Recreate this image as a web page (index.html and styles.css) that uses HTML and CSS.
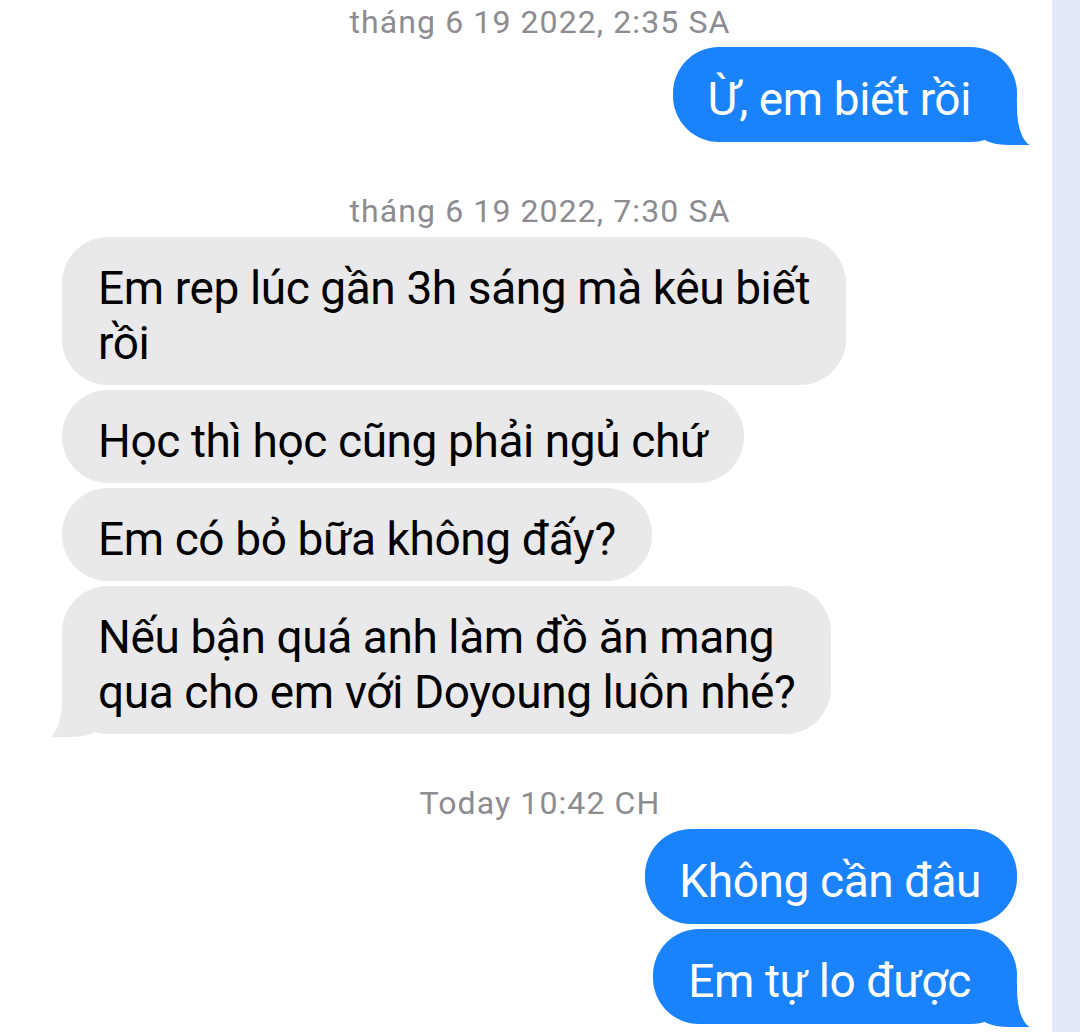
FILE: index.html
```html
<!DOCTYPE html>
<html lang="vi">
<head>
<meta charset="utf-8">
<title>Tin nhắn</title>
<link rel="stylesheet" href="styles.css">
</head>
<body>
<div class="screen">
  <main class="chat">
    <div class="stamp">tháng 6 19 2022, 2:35 SA</div>
    <div class="row me"><div class="bubble sent tail">Ừ, em biết rồi</div></div>

    <div class="stamp">tháng 6 19 2022, 7:30 SA</div>
    <div class="row them"><div class="bubble recv">Em rep lúc gần 3h sáng mà kêu biết<br>rồi</div></div>
    <div class="row them"><div class="bubble recv">Học thì học cũng phải ngủ chứ</div></div>
    <div class="row them"><div class="bubble recv">Em có bỏ bữa không đấy?</div></div>
    <div class="row them"><div class="bubble recv tail">Nếu bận quá anh làm đồ ăn mang<br>qua cho em với Doyoung luôn nhé?</div></div>

    <div class="stamp">Today 10:42 CH</div>
    <div class="row me"><div class="bubble sent">Không cần đâu</div></div>
    <div class="row me"><div class="bubble sent tail">Em tự lo được</div></div>
  </main>
  <aside class="edge"></aside>
</div>
</body>
</html>
```

FILE: styles.css
```css
html, body {
  margin: 0;
  padding: 0;
  background: #ffffff;
}

body {
  font-family: Roboto, "Noto Sans", sans-serif;
  -webkit-font-smoothing: antialiased;
}

.screen {
  width: 1080px;
  height: 1032px;
  overflow: hidden;
  display: flex;
}

.chat {
  flex: 1;
  display: flex;
  flex-direction: column;
  gap: 5px;
  padding: 4px 35px 0 62px;
  background: #ffffff;
}

.edge {
  width: 28px;
  flex: none;
  background: #e3e9f8;
}

.stamp {
  font-size: 32px;
  line-height: 36px;
  color: #8c8c91;
  text-align: center;
  margin: 46px 0 3px 0;
  padding-left: 1px;
  letter-spacing: 1.1px;
}

.stamp:first-child {
  margin-top: 0;
  margin-bottom: 2px;
}

.row {
  display: flex;
}

.row.me {
  justify-content: flex-end;
}

.row.them {
  justify-content: flex-start;
}

.bubble {
  position: relative;
  font-size: 46px;
  line-height: 55px;
  padding: 24px 36px 14px 36px;
  border-radius: 46px;
  white-space: nowrap;
  letter-spacing: -0.4px;
}

.sent {
  background: #1a83fb;
  color: #ffffff;
  padding-top: 25px;
  padding-bottom: 15px;
  padding-left: 34px;
}

.sent.tail {
  padding-left: 35px;
  padding-right: 46px;
}

.recv {
  background: #e9e9eb;
  color: #000000;
}

/* iOS style tails */
.bubble.tail::before,
.bubble.tail::after {
  content: "";
  position: absolute;
  bottom: -3px;
}

.sent.tail::before {
  right: -16px;
  width: 52px;
  height: 44px;
  background: #1a83fb;
  border-bottom-left-radius: 28px 10px;
}

.sent.tail::after {
  right: -30px;
  width: 30px;
  height: 48px;
  bottom: -4px;
  background: #ffffff;
  border-bottom-left-radius: 16px 38px;
}

.recv.tail::before {
  left: -15px;
  width: 52px;
  height: 44px;
  background: #e9e9eb;
  border-bottom-right-radius: 28px 10px;
}

.recv.tail::after {
  left: -30px;
  width: 30px;
  height: 48px;
  bottom: -4px;
  background: #ffffff;
  border-bottom-right-radius: 15px 38px;
}
```
